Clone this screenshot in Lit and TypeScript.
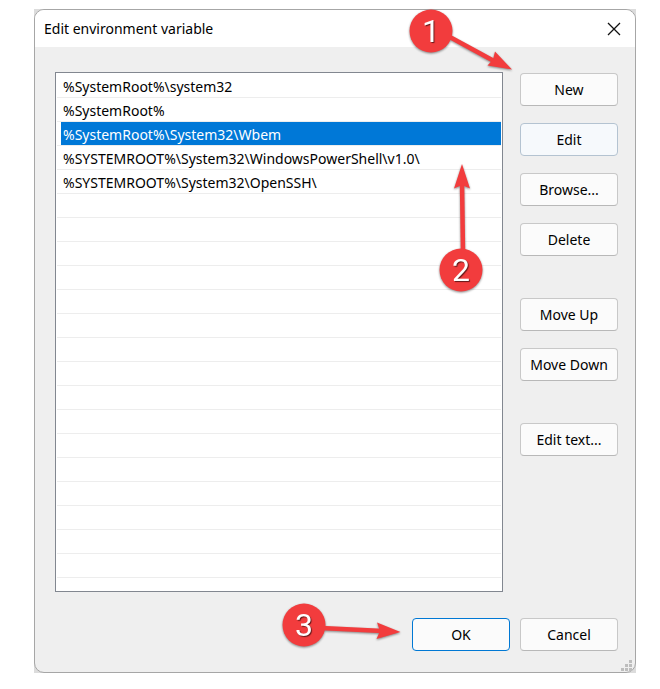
import { LitElement, html, css, svg } from "lit";
import { customElement, property, state } from "lit/decorators.js";
import { classMap } from "lit/directives/class-map.js";

const PATHS = [
  "%SystemRoot%\\system32",
  "%SystemRoot%",
  "%SystemRoot%\\System32\\Wbem",
  "%SYSTEMROOT%\\System32\\WindowsPowerShell\\v1.0\\",
  "%SYSTEMROOT%\\System32\\OpenSSH\\",
];

const GROUPS = [["New", "Edit", "Browse...", "Delete"], ["Move Up", "Move Down"], ["Edit text..."]];

interface Step {
  w: number;
  h: number;
  cx: number;
  cy: number;
  shaft: string;
  head: string;
}

const STEPS: Record<string, Step> = {
  "1": { w: 108, h: 66, cx: 23, cy: 23, shaft: "M40 28L86 53", head: "M104 61.500L87 43.500L85 51.500L79.500 57.500Z" },
  "2": { w: 48, h: 136, cx: 23, cy: 109, shaft: "M25 92L24 20", head: "M24 3L16 27.500L24 24L32 27.500Z" },
  "3": { w: 124, h: 48, cx: 23, cy: 23, shaft: "M40 26L102 29", head: "M119.500 30L96 20.500L99 29L95.500 37Z" },
};

@customElement("step-marker")
export class StepMarker extends LitElement {
  @property() step = "1";

  static styles = css`
    :host { display: block; pointer-events: none; }
    .art { display: block; filter: drop-shadow(0 1px 1px rgba(0, 0, 0, 0.45)); }
    .disc, .head { fill: #f23c3d; }
    .shaft { stroke: #f23c3d; stroke-width: 4.5; fill: none; }
    .digit {
      font: 400 32px Roboto, "Liberation Sans", sans-serif;
      fill: #fff;
      text-anchor: middle;
      text-shadow: 1px 1px 1px rgba(0, 0, 0, 0.6);
    }
  `;

  render() {
    const s = STEPS[this.step];
    return html`<svg class="art" width=${s.w} height=${s.h} viewBox="0 0 ${s.w} ${s.h}">
      ${svg`<path class="shaft" d=${s.shaft}></path>
      <path class="head" d=${s.head}></path>
      <circle class="disc" cx=${s.cx} cy=${s.cy} r="21.5"></circle>
      <text class="digit" x=${s.cx} y=${s.cy + 11}>${this.step}</text>`}
    </svg>`;
  }
}

@customElement("app-root")
export class AppRoot extends LitElement {
  @state() private selected = 2;

  static styles = css`
    :host {
      display: flex;
      min-height: 100vh;
      box-sizing: border-box;
      padding: 9px 24px 16px 34px;
      background: #fff;
      color: #000;
      font: 14px/24px "Noto Sans", "Open Sans", sans-serif;
    }
    .backdrop { flex: 1; display: flex; min-width: 0; background: #dcdcdc; }
    .dialog {
      position: relative;
      flex: 1;
      min-width: 0;
      display: flex;
      flex-direction: column;
      border: 1px solid #a6a6a6;
      border-radius: 10px;
      background: #efefef;
    }
    .title {
      display: flex;
      align-items: center;
      justify-content: space-between;
      height: 37px;
      padding: 0 10px 0 9px;
      border-radius: 9px 9px 0 0;
      background: #fff;
    }
    h1 { margin: 0; font-size: 14px; font-weight: 400; }
    .close { display: flex; padding: 4px; border: 0; background: none; }
    .close svg { stroke: #111; stroke-width: 1.3; }
    .body { flex: 1; display: flex; gap: 17px; padding: 25px 17px 26px 20px; }
    .list {
      position: relative;
      flex: 1;
      min-width: 0;
      border: 1px solid #828790;
      background: #fff;
      padding: 1px;
    }
    .rows {
      height: 100%;
      margin: 0;
      padding: 0;
      list-style: none;
      background: repeating-linear-gradient(#fff 0 23px, #ededed 23px 24px);
    }
    .row {
      height: 23px;
      padding: 0 2px;
      margin: 0 0 1px 4px;
      line-height: 26px;
      white-space: nowrap;
      cursor: default;
    }
    .on { background: #0078d7; color: #fff; }
    .side { display: flex; flex-direction: column; gap: 42px; padding-top: 1px; }
    .group { display: flex; flex-direction: column; gap: 17px; }
    .btn {
      width: 98px;
      height: 33px;
      padding: 0;
      border: 1px solid #c8c8c8;
      border-bottom-color: #b8b8b8;
      border-radius: 4px;
      background: #fbfbfb;
      color: #000;
      font: 14px/20px "Noto Sans", "Open Sans", sans-serif;
      white-space: nowrap;
    }
    .hover { border-color: #b4c3d1; background: #f6f9fc; }
    .default { border-color: #0078d4; }
    .foot { position: relative; display: flex; justify-content: flex-end; gap: 10px; padding: 0 17px 21px; }
    .grip { position: absolute; right: 3px; bottom: 1px; fill: #bdbdbd; }
    .m1 { position: absolute; right: 119px; top: -2px; }
    .m2 { position: absolute; right: 16px; top: 88px; }
    .m3 { position: absolute; right: 230px; bottom: 22px; }
  `;

  render() {
    return html`<div class="backdrop">
      <main class="dialog" role="dialog" aria-labelledby="title">
        <header class="title">
          <h1 id="title">Edit environment variable</h1>
          <button class="close" aria-label="Close">
            <svg width="14" height="14" viewBox="0 0 14 14"><path d="M1 1L13 13M13 1L1 13"></path></svg>
          </button>
        </header>
        <div class="body">
          <div class="list">
            <ul class="rows" role="listbox" aria-labelledby="title">
              ${PATHS.map(
                (p, i) => html`<li
                  class=${classMap({ row: true, on: i === this.selected })}
                  role="option"
                  aria-selected=${i === this.selected}
                  @click=${() => (this.selected = i)}
                >${p}</li>`
              )}
            </ul>
            <step-marker class="m2" step="2"></step-marker>
          </div>
          <div class="side">
            ${GROUPS.map(
              (g) => html`<div class="group">
                ${g.map((b) => html`<button class=${classMap({ btn: true, hover: b === "Edit" })}>${b}</button>`)}
              </div>`
            )}
          </div>
        </div>
        <footer class="foot">
          <button class="btn default">OK</button>
          <button class="btn">Cancel</button>
          <step-marker class="m3" step="3"></step-marker>
          <svg class="grip" width="11" height="11" viewBox="0 0 11 11">
            <path d="M8 0h3v3h-3zM4 4h3v3h-3zM8 4h3v3h-3zM0 8h3v3h-3zM4 8h3v3h-3zM8 8h3v3h-3z"></path>
          </svg>
        </footer>
        <step-marker class="m1" step="1"></step-marker>
      </main>
    </div>`;
  }
}
